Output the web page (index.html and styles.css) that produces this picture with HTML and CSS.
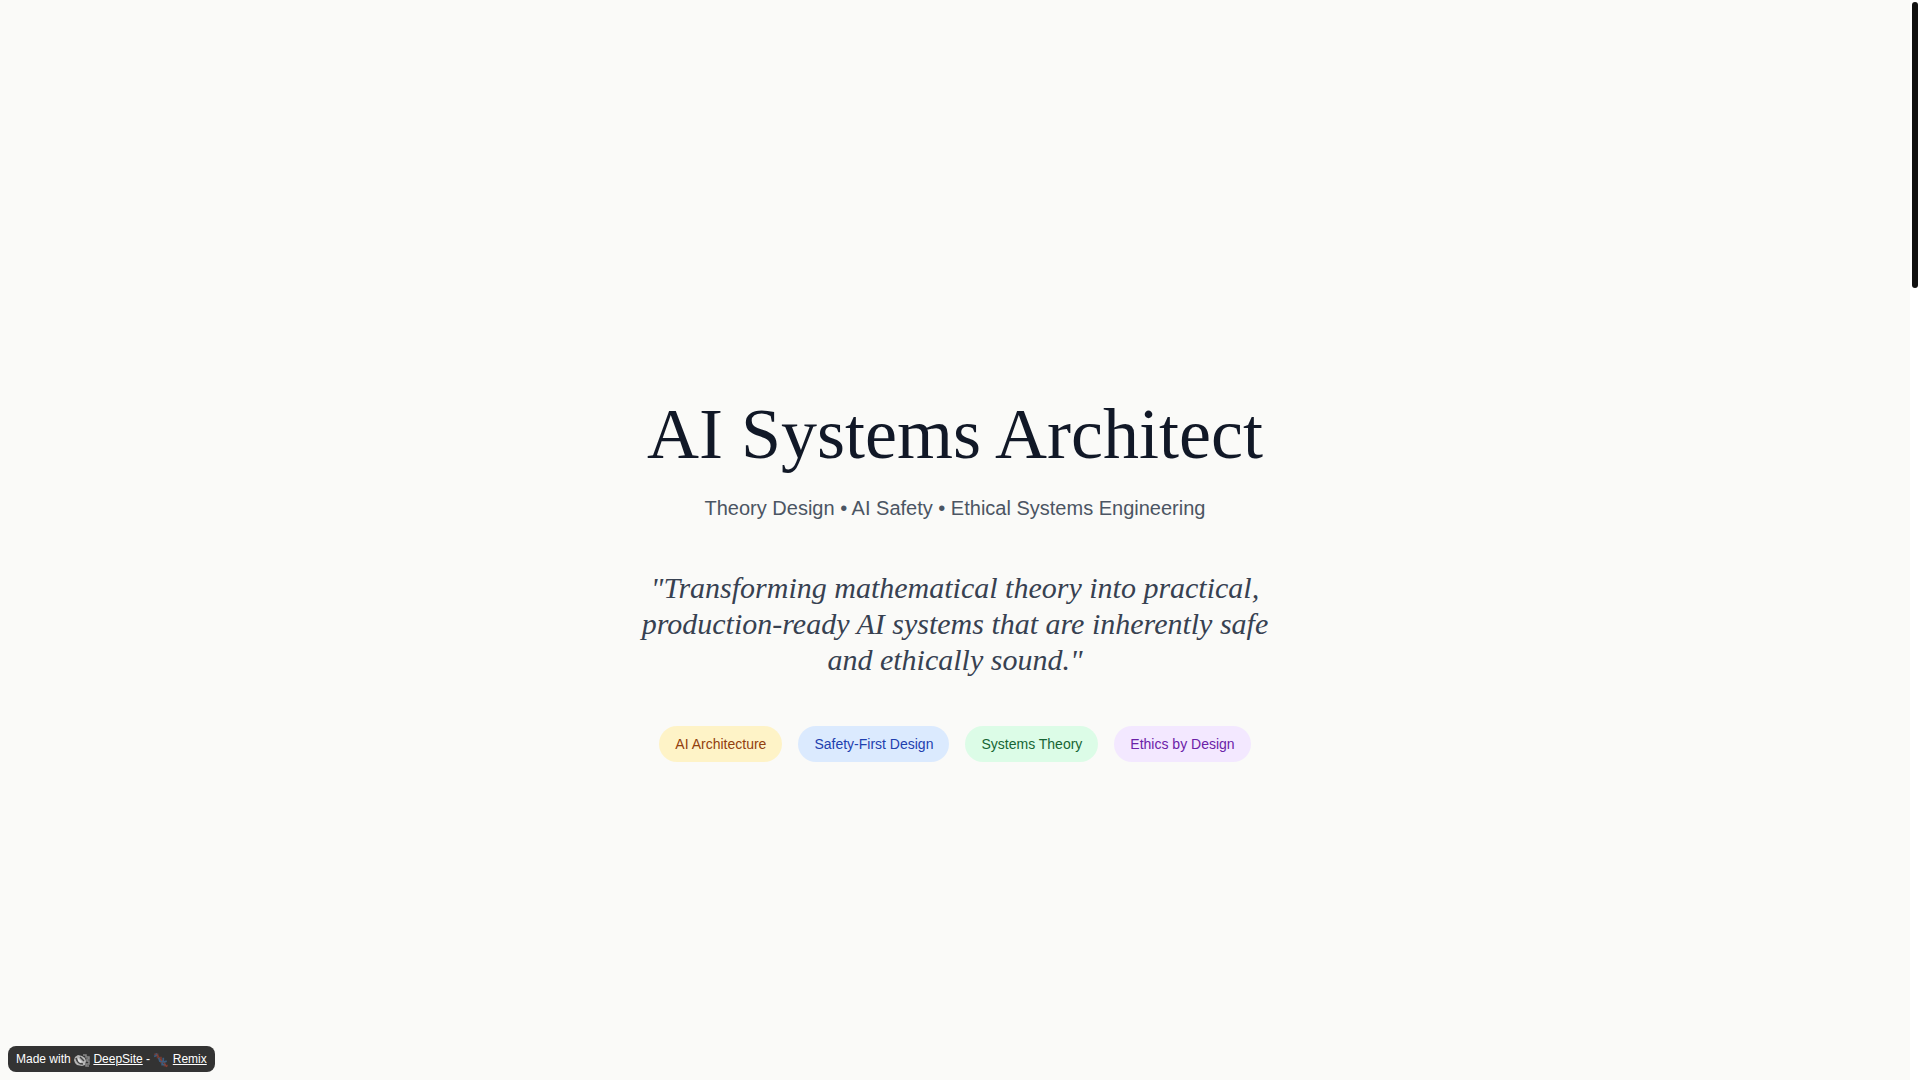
FILE: index.html
```html
<!DOCTYPE html>
<html lang="en">
<head>
    <meta charset="UTF-8">
    <meta name="viewport" content="width=device-width, initial-scale=1.0">
    <title>AI Systems Architect</title>
    <link rel="stylesheet" href="styles.css">
</head>
<body>

    <main class="hero">
        <div class="hero-content">
            <h1>AI Systems Architect</h1>
            <p class="subtitle">Theory Design • AI Safety • Ethical Systems Engineering</p>
            <p class="quote">"Transforming mathematical theory into practical, production-ready AI systems that are inherently safe and ethically sound."</p>
            <div class="tags">
                <span class="tag amber">AI Architecture</span>
                <span class="tag blue">Safety-First Design</span>
                <span class="tag green">Systems Theory</span>
                <span class="tag purple">Ethics by Design</span>
            </div>
        </div>
    </main>

    <div class="scrollbar"><div class="thumb"></div></div>

    <p class="badge">
        Made with
        <svg class="logo" viewBox="0 0 16 16" aria-hidden="true">
            <path d="M0 8 1 5 4 3 8 4 11 6 12 9 11 13 8 14 3 13 1 11Z" fill="#b5b5b5"/>
            <path d="M9 3h3v2h3v2h-2v2h2v3h-3v2h3" fill="none" stroke="#888" stroke-width="1.5"/>
            <path d="M2 6c1 4 4 6 7 6M6 5l4 4" fill="none" stroke="#444" stroke-width="1.5"/>
            <path d="M4 6l4 4-2 1-2-2Z" fill="#dedede"/>
        </svg>
        <a href="#">DeepSite</a> -
        <svg class="dna" viewBox="0 0 14 14" aria-hidden="true">
            <path d="M1 2h3v3h3v4h3v3h3" fill="none" stroke="#713b32" stroke-width="1.5"/>
            <path d="M3 1v2l-2 1M5 5l1 3h3V5M9 9l3-1M8 9v2h3" fill="none" stroke="#3c5d80" stroke-width="1.5"/>
            <path d="M3 2l2 2M6 6l2 2M10 10l2 3" stroke="#8a4032"/>
        </svg>
        <a href="#">Remix</a>
    </p>

</body>
</html>
```
FILE: styles.css
```css
* {
    box-sizing: border-box;
    margin: 0;
}
body {
    display: flex;
    min-height: 100vh;
    font-family: "Liberation Sans", Arial, sans-serif;
    background-color: #fafaf8;
}
.hero {
    flex: 1;
    display: flex;
    align-items: center;
    justify-content: center;
    padding: 80px 24px 0;
    text-align: center;
}
.hero-content {
    max-width: 672px;
}
h1 {
    margin-bottom: 24px;
    font-family: "Liberation Serif", "Times New Roman", serif;
    font-size: 72px;
    font-weight: 400;
    line-height: 72px;
    color: #111827;
}
.subtitle {
    margin-bottom: 48px;
    font-size: 20px;
    line-height: 28px;
    color: #4b5563;
}
.quote {
    margin-bottom: 48px;
    font-family: "Liberation Serif", "Times New Roman", serif;
    font-size: 30px;
    font-style: italic;
    line-height: 36px;
    color: #374151;
}
.tags {
    display: flex;
    flex-wrap: wrap;
    justify-content: center;
    gap: 16px;
}
.tag {
    padding: 8px 16px;
    border-radius: 18px;
    font-size: 14px;
    line-height: 20px;
}
.amber {
    background-color: #fef3c7;
    color: #92400e;
}
.blue {
    background-color: #dbeafe;
    color: #1e40af;
}
.green {
    background-color: #dcfce7;
    color: #166534;
}
.purple {
    background-color: #f3e8ff;
    color: #6b21a8;
}

/* Scroll track on the right */
.scrollbar {
    width: 10px;
    padding: 2px;
    background-color: #fff;
}
.thumb {
    height: 286px;
    border-radius: 3px;
    background-color: #111;
}

/* Badge over the page */
.badge {
    position: fixed;
    left: 8px;
    bottom: 8px;
    padding: 4px 8px;
    border-radius: 8px;
    background-color: #333;
    color: #fff;
    font-size: 12px;
    line-height: 18px;
}
.badge a {
    color: #fff;
}
.logo,
.dna {
    width: 16px;
    height: 16px;
    vertical-align: middle;
}
```
